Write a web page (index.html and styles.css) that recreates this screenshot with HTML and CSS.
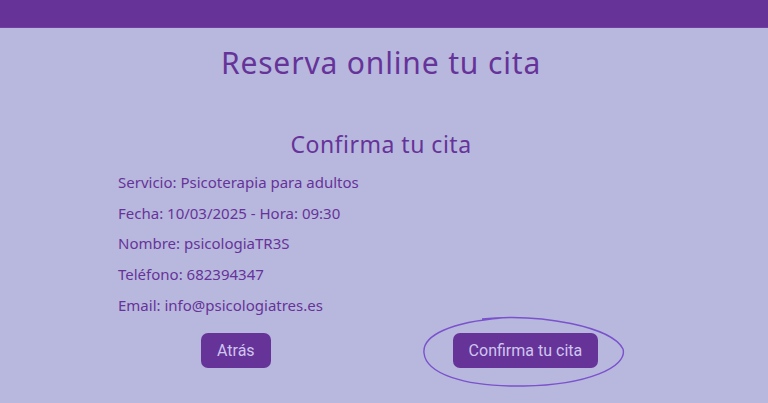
FILE: index.html
```html
<!DOCTYPE html>
<html lang="es">
<head>
<meta charset="utf-8">
<title>Reserva online tu cita</title>
<link rel="stylesheet" href="styles.css">
</head>
<body>
<header class="topbar"></header>
<main class="page">
  <h1 class="title">Reserva online tu cita</h1>
  <section class="confirm">
    <h2 class="subtitle">Confirma tu cita</h2>
    <div class="details">
      <p class="line">Servicio: Psicoterapia para adultos</p>
      <p class="line">Fecha: 10/03/2025 - Hora: 09:30</p>
      <p class="line">Nombre: psicologiaTR3S</p>
      <p class="line">Teléfono: 682394347</p>
      <p class="line">Email: info@psicologiatres.es</p>
    </div>
    <div class="actions">
      <button class="btn">Atrás</button>
      <div class="highlight">
        <svg class="ring" width="204" height="73" viewBox="0 0 204 73">
          <path d="M60 4 C120 -2 190 12 201 34 C206 52 165 70 102 71 C40 72 4 58 2 38 C0 20 30 7 80 3" fill="none" stroke="#7a52cc" stroke-width="1.4"/>
        </svg>
        <button class="btn">Confirma tu cita</button>
      </div>
    </div>
  </section>
</main>
</body>
</html>
```
FILE: styles.css
```css
html, body {
  margin: 0;
  padding: 0;
}
body {
  background: #b8b8de;
  color: #663399;
  font-family: "Noto Sans", "DejaVu Sans", sans-serif;
  width: 768px;
  height: 403px;
  overflow: hidden;
}
.topbar {
  height: 27px;
  background: #663399;
  border-bottom: 1px solid #7040a8;
}
.page {
  display: flex;
  flex-direction: column;
  padding-right: 6px;
}
.title {
  margin: 16px 0 0;
  text-align: center;
  font-weight: 400;
  font-size: 30px;
  line-height: 38px;
  letter-spacing: 0.85px;
}
.confirm {
  display: flex;
  flex-direction: column;
  margin-top: 48px;
}
.subtitle {
  margin: 0;
  text-align: center;
  font-weight: 400;
  font-size: 23px;
  line-height: 28px;
  letter-spacing: 0.5px;
}
.details {
  display: flex;
  flex-direction: column;
  padding-left: 118px;
  margin-top: 9px;
}
.line {
  margin: 0;
  font-size: 15px;
  line-height: 30.7px;
}
.actions {
  display: flex;
  align-items: center;
  padding-left: 201px;
  margin-top: 12px;
}
.btn {
  background: #663399;
  color: #cfc6ee;
  border: none;
  border-radius: 7px;
  height: 35px;
  padding: 0 16px;
  font-family: "Roboto", "Inter", sans-serif;
  font-size: 16px;
}
.highlight {
  position: relative;
  margin-left: 182px;
}
.ring {
  position: absolute;
  left: -31px;
  top: -18px;
  pointer-events: none;
}
```
